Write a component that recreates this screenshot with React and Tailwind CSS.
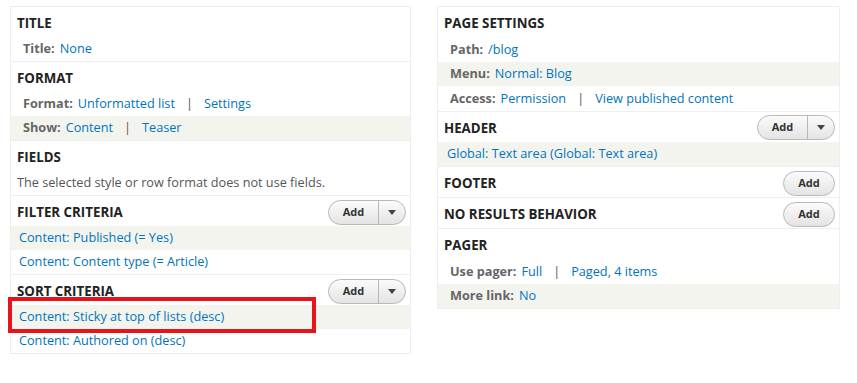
import React from "react";

const F = { fontFamily: '"Open Sans", "Liberation Sans", sans-serif' };

function AddBtn({ split }) {
  return (
    <div className="flex h-[25px] items-stretch rounded-full border border-[#b8b8b8] bg-gradient-to-b from-[#fbfbfb] to-[#e4e4e4] text-[11px] font-bold text-[#333]">
      <span className={split ? "flex w-[50px] items-center justify-center border-r border-[#b8b8b8]" : "flex w-[50px] items-center justify-center"}>Add</span>
      {split && (
        <span className="flex w-[26px] items-center justify-center">
          <svg width="8" height="5" viewBox="0 0 8 5"><path d="M0 0h8L4 5z" fill="#444" /></svg>
        </span>
      )}
    </div>
  );
}

function Section({ title, btn, children }) {
  return (
    <div className="border-t border-[#eeeeee] first:border-t-0">
      <div className="flex h-[30px] items-center justify-between pl-[6px] pr-[4px]">
        <span className="block pt-[4px] text-[13.3px] font-bold text-[#222]">{title}</span>
        {btn && <div className="pt-[2px]">{btn}</div>}
      </div>
      {children}
    </div>
  );
}

function Row({ gray, label, links, indent = "pl-[12px]", h = "h-[24px]" }) {
  return (
    <div className={`flex ${h} items-center ${indent} text-[12.7px] ${gray ? "bg-[#f3f4ee]" : ""}`}>
      {label && <span className="mr-[5px] font-bold text-[#666]">{label}</span>}
      {links.map((l, i) => (
        <React.Fragment key={i}>
          {i > 0 && <span className="mx-[11px] text-[#555]">|</span>}
          <span className="text-[#0074bd]">{l}</span>
        </React.Fragment>
      ))}
    </div>
  );
}

export default function App() {
  const rh = "h-[24.5px]";
  return (
    <div style={F} className="relative h-[383px] w-[857px] bg-white">
      <div className="flex items-start gap-[26px] pl-[10px] pt-[6px]">
        <div className="w-[401px] border border-[#eeeeee]">
          <Section title="TITLE">
            <Row label="Title:" links={["None"]} />
          </Section>
          <Section title="FORMAT">
            <Row label="Format:" links={["Unformatted list", "Settings"]} />
            <Row gray label="Show:" links={["Content", "Teaser"]} />
          </Section>
          <Section title="FIELDS">
            <div className="flex h-[24px] items-center pl-[6px] text-[12.7px] text-[#555]">
              The selected style or row format does not use fields.
            </div>
          </Section>
          <Section title="FILTER CRITERIA" btn={<AddBtn split />}>
            <Row gray indent="pl-[8px]" links={["Content: Published (= Yes)"]} />
            <Row indent="pl-[8px]" links={["Content: Content type (= Article)"]} />
          </Section>
          <Section title="SORT CRITERIA" btn={<AddBtn split />}>
            <Row gray indent="pl-[8px]" links={["Content: Sticky at top of lists (desc)"]} />
            <Row indent="pl-[8px]" links={["Content: Authored on (desc)"]} />
          </Section>
        </div>
        <div className="w-[403px] border border-[#eeeeee]">
          <Section title="PAGE SETTINGS">
            <Row h={rh} label="Path:" links={["/blog"]} />
            <Row h={rh} gray label="Menu:" links={["Normal: Blog"]} />
            <Row h={rh} label="Access:" links={["Permission", "View published content"]} />
          </Section>
          <Section title="HEADER" btn={<AddBtn split />}>
            <Row h={rh} gray indent="pl-[9px]" links={["Global: Text area (Global: Text area)"]} />
          </Section>
          <Section title="FOOTER" btn={<AddBtn />} />
          <Section title="NO RESULTS BEHAVIOR" btn={<AddBtn />} />
          <Section title="PAGER">
            <Row h={rh} label="Use pager:" links={["Full", "Paged, 4 items"]} />
            <Row h={rh} gray label="More link:" links={["No"]} />
          </Section>
        </div>
      </div>
      <div className="absolute left-[8px] top-[297px] h-[36px] w-[308px] border-[4px] border-[#e8141c]" />
    </div>
  );
}
